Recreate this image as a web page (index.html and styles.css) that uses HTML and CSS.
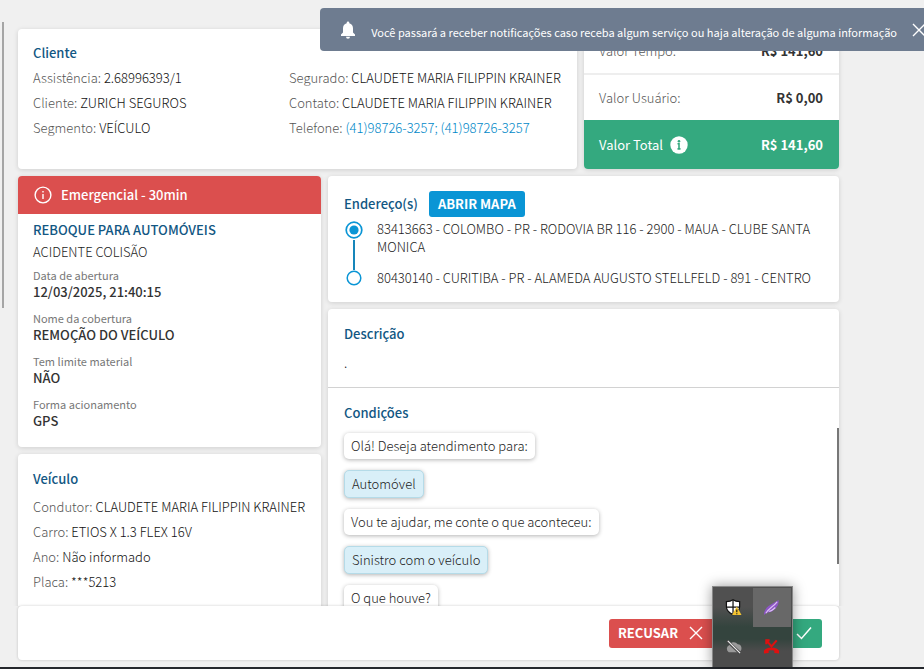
FILE: index.html
```html
<!DOCTYPE html>
<html lang="pt-BR">
  <head>
    <meta charset="utf-8">
    <meta name="viewport" content="width=device-width, initial-scale=1">
    <title>Serviço</title>
    <link rel="stylesheet" href="styles.css">
  </head>
  <body>
    <div class="app">
      <div class="side-scroll"></div>
      <main class="content">
        <div class="top-row">
          <section class="card client">
            <h2 class="title">Cliente</h2>
            <div class="client-cols">
              <div>
                <p class="field">Assistência: <span>2.68996393/1</span></p>
                <p class="field">Cliente: <span>ZURICH SEGUROS</span></p>
                <p class="field">Segmento: <span>VEÍCULO</span></p>
              </div>
              <div>
                <p class="field">Segurado: <span>CLAUDETE MARIA FILIPPIN KRAINER</span></p>
                <p class="field">Contato: <span>CLAUDETE MARIA FILIPPIN KRAINER</span></p>
                <p class="field">Telefone: <a href="tel:41987263257">(41)98726-3257; (41)98726-3257</a></p>
              </div>
            </div>
          </section>
          <section class="card values">
            <div class="value-row"><span>Valor Tempo:</span><strong>R$ 141,60</strong></div>
            <div class="value-row"><span>Valor Usuário:</span><strong>R$ 0,00</strong></div>
            <div class="value-row total">
              <span>Valor Total</span>
              <svg class="info" viewBox="0 0 18 18"><circle cx="9" cy="9" r="8.7" fill="#fff"/><circle cx="9" cy="5.2" r="1.3" fill="#34a97f"/><path d="M7.5 7.8H9v5M7.5 12.9h3" fill="none" stroke="#34a97f" stroke-width="1.6"/></svg>
              <strong>R$ 141,60</strong>
            </div>
          </section>
        </div>

        <div class="main-row">
          <div class="column">
            <section class="card service">
              <div class="urgent">
                <svg viewBox="0 0 18 18"><circle cx="9" cy="9" r="7.9" fill="none" stroke="#fff" stroke-width="1.4"/><path d="M9 5v1.6M9 8v5" stroke="#fff" stroke-width="1.4"/></svg>
                <strong>Emergencial - 30min</strong>
              </div>
              <div class="service-body">
                <h2 class="title">REBOQUE PARA AUTOMÓVEIS</h2>
                <p class="cause">ACIDENTE COLISÃO</p>
                <dl class="details">
                  <div><dt>Data de abertura</dt><dd>12/03/2025, 21:40:15</dd></div>
                  <div><dt>Nome da cobertura</dt><dd>REMOÇÃO DO VEÍCULO</dd></div>
                  <div><dt>Tem limite material</dt><dd>NÃO</dd></div>
                  <div><dt>Forma acionamento</dt><dd>GPS</dd></div>
                </dl>
              </div>
            </section>
            <section class="card vehicle">
              <h2 class="title">Veículo</h2>
              <p class="field">Condutor: <span>CLAUDETE MARIA FILIPPIN KRAINER</span></p>
              <p class="field">Carro: <span>ETIOS X 1.3 FLEX 16V</span></p>
              <p class="field">Ano: <span>Não informado</span></p>
              <p class="field">Placa: <span>***5213</span></p>
            </section>
          </div>

          <div class="column">
            <section class="card address">
              <div class="address-head">
                <h2 class="title">Endereço(s)</h2>
                <button class="btn-map" type="button">ABRIR MAPA</button>
              </div>
              <div class="route">
                <div class="route-line">
                  <svg viewBox="0 0 20 20"><circle cx="10" cy="10" r="7.8" fill="#fff" stroke="#0a95d5" stroke-width="1.7"/><circle cx="10" cy="10" r="4.6" fill="#0a95d5"/></svg>
                  <i></i>
                  <svg class="end" viewBox="0 0 16 16"><circle cx="8" cy="8" r="6.8" fill="#fff" stroke="#0a95d5" stroke-width="1.5"/></svg>
                </div>
                <div class="stops">
                  <p>83413663 - COLOMBO - PR - RODOVIA BR 116 - 2900 - MAUA - CLUBE SANTA MONICA</p>
                  <p>80430140 - CURITIBA - PR - ALAMEDA AUGUSTO STELLFELD - 891 - CENTRO</p>
                </div>
              </div>
            </section>
            <section class="card notes">
              <div class="description">
                <h2 class="title">Descrição</h2>
                <p>.</p>
              </div>
              <div class="conditions">
                <h2 class="title">Condições</h2>
                <ul class="chat">
                  <li>Olá! Deseja atendimento para:</li>
                  <li class="answer">Automóvel</li>
                  <li>Vou te ajudar, me conte o que aconteceu:</li>
                  <li class="answer">Sinistro com o veículo</li>
                  <li>O que houve?</li>
                </ul>
                <div class="chat-scroll"></div>
              </div>
            </section>
          </div>
        </div>
      </main>

      <footer class="actions">
        <button class="btn refuse" type="button">
          RECUSAR
          <svg viewBox="0 0 14 14"><path d="M1 1l12 12M13 1L1 13" stroke="#fff" stroke-width="1.4"/></svg>
        </button>
        <button class="btn accept" type="button" aria-label="Aceitar">
          <svg viewBox="0 0 16 14"><path d="M1 8l4.5 4.5L15 1.5" fill="none" stroke="#fff" stroke-width="1.5"/></svg>
        </button>
      </footer>
      <div class="taskbar"></div>

      <div class="toast">
        <svg class="bell" viewBox="0 0 16 18"><path fill="#fff" d="M8 .5a1.3 1.3 0 0 1 1.3 1.3v.5c2.3.6 3.7 2.4 3.7 5v4.200l2 2V15H1v-1.500l2-2V7.300c0-2.600 1.400-4.400 3.700-5v-.5A1.300 1.300 0 0 1 8 .5zM6 15.700h4a2 2 0 0 1-4 0z"/></svg>
        <p>Você passará a receber notificações caso receba algum serviço ou haja alteração de alguma informação</p>
        <button class="close" type="button" aria-label="Fechar">
          <svg viewBox="0 0 14 14"><path d="M1 1l12 12M13 1L1 13" stroke="#fff" stroke-width="1.4"/></svg>
        </button>
      </div>

      <div class="tray">
        <div><svg viewBox="0 0 18 18"><path d="M8.500.8C6.500 2.300 4 2.800 1.500 2.800v5.500c0 4 3 6.500 7 8.200 4-1.700 7-4.200 7-8.200V2.800c-2.500 0-5-.5-7-2z" fill="#fff" stroke="#111" stroke-width="1.300"/><path d="M8.500 1v15M1.500 8.500h14" stroke="#111" stroke-width="1.300"/><path d="M12.500 8L17.500 17h-10z" fill="#f4c430"/><path d="M12.500 11v3M12.500 15v1.200" stroke="#222" stroke-width="1.300"/></svg></div>
        <div class="hover"><svg viewBox="0 0 18 18"><path d="M1 17C1 12 4 8 8 6l8.500-5C17 5 15 9 12 11c-3 3-6 3-8 3.500z" fill="#8c55c4"/><path d="M3 15C6 10 11 8 15 3M6 13c3 0 5-2 7-4" fill="none" stroke="#dcc0f5" stroke-width="1.200"/></svg></div>
        <div><svg viewBox="0 0 18 18"><path d="M4 15a4 4 0 0 1 0-7 5.500 5.500 0 0 1 9.500-1.500A4.300 4.300 0 0 1 14 15z" fill="#999"/><path d="M2 3l14 13" stroke="#444" stroke-width="3"/><path d="M3 3l13 13" stroke="#eee" stroke-width="1.300"/></svg></div>
        <div><svg viewBox="0 0 18 18"><path d="M1 16.500v-3c1-2 4-3.500 8-3.500s7 1.500 8 3.500v3l-5-.5v-2.600c-2-.6-4-.6-6 0V16z" fill="#e01010"/><path d="M3.500 2.500L9 9l5.500-6.500M3.500 6.500v-4H7" fill="none" stroke="#e01010" stroke-width="2.200"/></svg></div>
      </div>
    </div>
  </body>
</html>
```

FILE: styles.css
```css
*{
  box-sizing: border-box;
}
body{
  margin: 0;
  background-color: #f0f0f0;
  color: #1c1c1c;
  font: 300 13px/18px "Noto Sans CJK SC", "Noto Sans", sans-serif;
}
h2, p, ul, dl, dd{
  margin: 0;
  padding: 0;
}
svg{
  display: block;
  flex: none;
}
button{
  border: 0;
  color: #fff;
  font: inherit;
  font-weight: bold;
  cursor: pointer;
}
.app{
  position: relative;
  display: flex;
  flex-direction: column;
  height: 100vh;
  overflow: hidden;
}
.side-scroll{
  position: absolute;
  left: 2px;
  top: 22px;
  width: 2px;
  height: 286px;
  background-color: #a5a5a5;
}
.content{
  flex: 1;
  min-height: 0;
  margin: 0 77px 0 10px;
  padding: 29px 8px 0;
  overflow: hidden;
}
.card{
  background-color: #fff;
  border-radius: 4px;
  box-shadow: 0 1px 5px rgba(0, 0, 0, .14);
}
.title{
  color: #125783;
  font-size: 13px;
  line-height: 18px;
  font-weight: 500;
}

/* cliente + valores */
.top-row{
  display: grid;
  grid-template-columns: minmax(0, 1fr) 255px;
  gap: 7px;
}
.client{
  padding: 15px 15px 29px;
}
.client-cols{
  display: grid;
  grid-template-columns: 256px minmax(0, 1fr);
  padding-top: 3px;
}
.field{
  color: #555;
  line-height: 25px;
  white-space: nowrap;
}
.field span{
  color: #111;
}
.field a{
  color: #0088c8;
  text-decoration: none;
}
.values{
  display: flex;
  flex-direction: column;
  overflow: hidden;
}
.value-row{
  display: flex;
  align-items: center;
  height: 45px;
  padding: 0 16px 0 15px;
  color: #555;
}
.value-row:first-child{
  height: 46px;
  border-bottom: 2px solid #eee;
}
.value-row strong{
  margin-left: auto;
  color: #333;
  font-weight: 700;
}
.value-row.total{
  flex: 1;
  background-color: #34a97f;
}
.total, .total strong{
  color: #fff;
}
.total span{
  font-weight: 400;
}
.info{
  width: 18px;
  height: 18px;
  margin-left: 7px;
}

.main-row{
  display: grid;
  grid-template-columns: 303px minmax(0, 1fr);
  gap: 7px;
  margin-top: 7px;
}
.column{
  display: flex;
  flex-direction: column;
  gap: 7px;
}

/* servico */
.urgent{
  display: flex;
  align-items: center;
  gap: 9px;
  height: 38px;
  padding: 0 16px;
  border-radius: 4px 4px 0 0;
  background-color: #db4f4e;
  color: #fff;
}
.urgent strong{
  font-weight: 500;
}
.urgent svg{
  width: 18px;
  height: 18px;
}
.service-body{
  padding: 7px 15px 18px;
}
.cause{
  padding-top: 4px;
}
.details{
  display: grid;
  gap: 10px;
  padding-top: 6px;
}
.details dt{
  color: #777;
  font-size: 11px;
  font-weight: 400;
  line-height: 16px;
}
.details dd{
  color: #333;
  font-weight: 500;
  line-height: 17px;
}
.vehicle{
  padding: 16px 15px 40px;
}
.vehicle .title{
  padding-bottom: 6px;
}

/* enderecos */
.address{
  padding: 15px 12px 14px 16px;
}
.address-head{
  display: flex;
  align-items: center;
  gap: 11px;
}
.btn-map{
  height: 26px;
  padding: 0 9px;
  border-radius: 3px;
  background-color: #0a95d5;
}
.route{
  display: flex;
  gap: 13px;
  padding-top: 3px;
}
.route-line{
  display: flex;
  flex-direction: column;
  align-items: center;
  padding-bottom: 2px;
}
.route-line svg{
  width: 20px;
  height: 20px;
}
.route-line i{
  flex: 1;
  width: 2px;
  background-color: #1686ba;
}
.route-line .end{
  width: 16px;
  height: 16px;
}
.stops{
  display: grid;
  gap: 13px;
  padding-bottom: 1px;
}

/* descricao + condicoes */
.description{
  height: 79px;
  padding: 16px;
  border-bottom: 1px solid #d2d2d2;
}
.description p{
  padding-top: 11px;
}
.conditions{
  position: relative;
  padding: 16px;
}
.chat{
  display: flex;
  flex-direction: column;
  align-items: flex-start;
  gap: 11px;
  padding-top: 11px;
  list-style: none;
}
.chat li{
  padding: 4px 7px;
  border-radius: 5px;
  box-shadow: 0 1px 4px rgba(0, 0, 0, .3);
}
.chat .answer{
  border: 1px solid #b5dbe8;
  background-color: #d9eff8;
}
.chat-scroll{
  position: absolute;
  right: 0;
  top: 40px;
  width: 2px;
  height: 136px;
  background-color: #777;
}

/* rodape */
.actions{
  z-index: 1;
  display: flex;
  align-items: center;
  justify-content: flex-end;
  height: 54px;
  margin: 0 85px 7px 18px;
  padding: 0 17px;
  border-radius: 4px;
  background-color: #fff;
  box-shadow: 0 0 3px rgba(0, 0, 0, .2);
}
.btn{
  display: flex;
  align-items: center;
  gap: 11px;
  height: 29px;
  padding: 0 9px;
  border-radius: 3px;
}
.btn svg{
  width: 14px;
  height: 14px;
}
.refuse{
  width: 107px;
  background-color: #db4f4e;
}
.accept{
  justify-content: flex-end;
  width: 106px;
  background-color: #34a97f;
}
.btn.accept svg{
  width: 18px;
}
.taskbar{
  height: 2px;
  background-color: #25282d;
}

.toast{
  position: absolute;
  z-index: 2;
  top: 8px;
  right: 0;
  display: flex;
  align-items: center;
  height: 43px;
  padding-left: 20px;
  border-radius: 4px 0 0 4px;
  background-color: #6e7c90;
  color: #fff;
  font-size: 11px;
  font-weight: 400;
  white-space: nowrap;
}
.toast p{
  padding: 4px 15px 0;
}
.bell{
  width: 16px;
  height: 18px;
}
.close{
  width: 12px;
  padding: 0;
  overflow: hidden;
  background: none;
}
.close svg{
  width: 14px;
  height: 14px;
}

.tray{
  position: absolute;
  z-index: 2;
  right: 131px;
  bottom: 2px;
  display: grid;
  grid-template-columns: 1fr 1fr;
  width: 81px;
  height: 81px;
  padding: 1px;
  border: 1px solid #888;
  border-bottom: 0;
  background: linear-gradient(#505050 25%, #34443e 50%, #34443e 65%, #4c4c4c 80%);
  box-shadow: 0 0 12px rgba(0, 0, 0, .4);
}
.tray div{
  display: grid;
  place-items: center;
}
.tray .hover{
  background-color: #686868;
}
.tray svg{
  width: 17px;
  height: 17px;
}
```
